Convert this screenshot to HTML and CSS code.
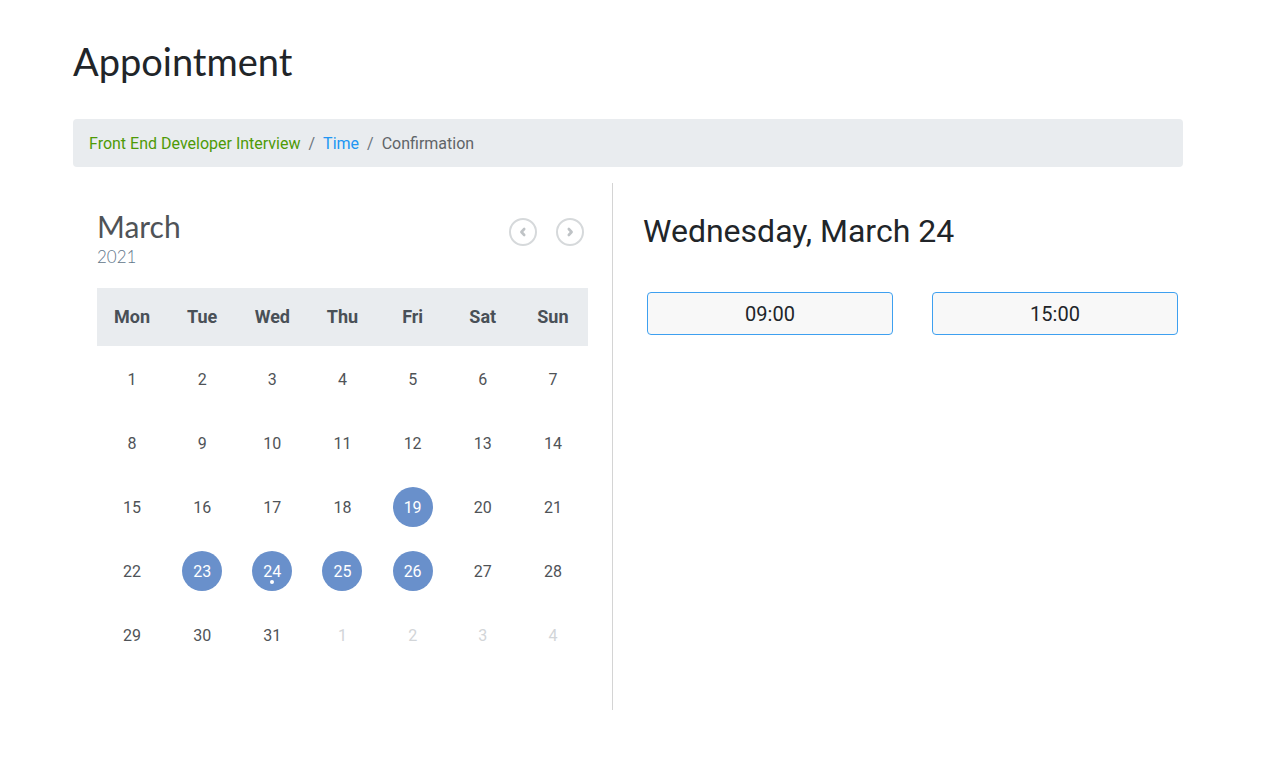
FILE: index.html
```html
<!DOCTYPE html>
<html lang="en">
<head>
<meta charset="utf-8">
<title>Appointment</title>
<link rel="stylesheet" href="styles.css">
</head>
<body>
<div class="container">
  <h1 class="page-title">Appointment</h1>
  <nav class="breadcrumb">
    <span class="crumb crumb-done">Front End Developer Interview</span>
    <span class="sep">/</span>
    <span class="crumb crumb-active">Time</span>
    <span class="sep">/</span>
    <span class="crumb crumb-next">Confirmation</span>
  </nav>
  <div class="row">
    <section class="cal-col">
      <div class="cal-head">
        <div class="cal-title">
          <div class="month">March</div>
          <div class="year">2021</div>
        </div>
        <div class="cal-nav">
          <button class="nav-btn" aria-label="Previous month">
            <svg width="12" height="12" viewBox="0 0 12 12"><path d="M7.2 3 L4.4 6 L7.2 9" fill="none" stroke="#bfc3c6" stroke-width="2.6" stroke-linecap="round" stroke-linejoin="round"/></svg>
          </button>
          <button class="nav-btn" aria-label="Next month">
            <svg width="12" height="12" viewBox="0 0 12 12"><path d="M4.8 3 L7.6 6 L4.8 9" fill="none" stroke="#bfc3c6" stroke-width="2.6" stroke-linecap="round" stroke-linejoin="round"/></svg>
          </button>
        </div>
      </div>
      <div class="cal-grid">
        <div class="dow">Mon</div><div class="dow">Tue</div><div class="dow">Wed</div><div class="dow">Thu</div><div class="dow">Fri</div><div class="dow">Sat</div><div class="dow">Sun</div>

        <div class="day"><span>1</span></div><div class="day"><span>2</span></div><div class="day"><span>3</span></div><div class="day"><span>4</span></div><div class="day"><span>5</span></div><div class="day"><span>6</span></div><div class="day"><span>7</span></div>

        <div class="day"><span>8</span></div><div class="day"><span>9</span></div><div class="day"><span>10</span></div><div class="day"><span>11</span></div><div class="day"><span>12</span></div><div class="day"><span>13</span></div><div class="day"><span>14</span></div>

        <div class="day"><span>15</span></div><div class="day"><span>16</span></div><div class="day"><span>17</span></div><div class="day"><span>18</span></div><div class="day"><span class="avail">19</span></div><div class="day"><span>20</span></div><div class="day"><span>21</span></div>

        <div class="day"><span>22</span></div><div class="day"><span class="avail">23</span></div><div class="day"><span class="avail selected">24</span></div><div class="day"><span class="avail">25</span></div><div class="day"><span class="avail">26</span></div><div class="day"><span>27</span></div><div class="day"><span>28</span></div>

        <div class="day"><span>29</span></div><div class="day"><span>30</span></div><div class="day"><span>31</span></div><div class="day other"><span>1</span></div><div class="day other"><span>2</span></div><div class="day other"><span>3</span></div><div class="day other"><span>4</span></div>
      </div>
    </section>
    <section class="time-col">
      <h2 class="date-title">Wednesday, March 24</h2>
      <div class="slots">
        <button class="slot">09:00</button>
        <button class="slot">15:00</button>
      </div>
    </section>
  </div>
</div>
</body>
</html>
```

FILE: styles.css
```css
* { box-sizing: border-box; }

html, body {
  margin: 0;
  padding: 0;
  background: #ffffff;
}

body {
  font-family: Roboto, "Liberation Sans", sans-serif;
  color: #212529;
}

.container {
  width: 1110px;
  margin-left: 73px;
  padding-top: 39px;
}

.page-title {
  margin: 0 0 35px 0;
  font-family: Lato, "Open Sans", sans-serif;
  font-weight: 400;
  font-size: 38px;
  line-height: 45px;
  color: #212529;
}

.breadcrumb {
  display: flex;
  align-items: center;
  height: 48px;
  padding: 0 16px;
  background: #e9ecef;
  border-radius: 4px;
  font-size: 16px;
  margin-bottom: 16px;
}

.sep {
  color: #6c757d;
  padding: 0 8px;
}

.crumb-done { color: #4e9a06; }
.crumb-active { color: #2196f3; }
.crumb-next { color: #5f6468; }

.row {
  display: flex;
  height: 527px;
}

.cal-col {
  width: 540px;
  border-right: 1px solid #d4d4d4;
  padding: 25px 24px 0 24px;
}

.cal-head {
  display: flex;
  justify-content: space-between;
  align-items: flex-start;
  margin-bottom: 21px;
}

.month {
  font-family: Lato, "Open Sans", sans-serif;
  font-size: 30px;
  line-height: 36px;
  color: #4f5357;
}

.year {
  font-family: Lato, "Open Sans", sans-serif;
  font-weight: 300;
  font-size: 17px;
  line-height: 20px;
  margin-top: 3px;
  color: #62768a;
}

.cal-nav {
  display: flex;
  gap: 19px;
  margin-top: 10px;
  margin-right: 4px;
}

.nav-btn {
  width: 28px;
  height: 28px;
  border: 2px solid #d6d9db;
  border-radius: 50%;
  background: #fff;
  padding: 0;
  display: flex;
  align-items: center;
  justify-content: center;
}

.cal-grid {
  display: grid;
  grid-template-columns: repeat(7, 1fr);
}

.dow {
  background: #e9ecef;
  height: 58px;
  padding-bottom: 2px;
  display: flex;
  align-items: center;
  justify-content: center;
  font-weight: 700;
  font-size: 18px;
  color: #495057;
}

.day {
  height: 64px;
  padding-top: 2px;
  display: flex;
  align-items: center;
  justify-content: center;
  font-size: 16px;
  color: #4f5357;
}

.day span {
  width: 40px;
  height: 40px;
  border-radius: 50%;
  display: flex;
  align-items: center;
  justify-content: center;
  position: relative;
}

.day .avail {
  background: #6990cb;
  color: #ffffff;
}

.day .selected::after {
  content: "";
  position: absolute;
  left: 18px;
  bottom: 7px;
  width: 4px;
  height: 4px;
  border-radius: 50%;
  background: #ffffff;
}

.day.other { color: #d2d5d8; }

.time-col {
  flex: 1;
  padding: 29px 0 0 30px;
}

.date-title {
  margin: 0 0 42px 0;
  font-weight: 400;
  font-size: 32px;
  line-height: 38px;
  color: #212529;
}

.slots {
  display: flex;
  gap: 39px;
  padding-left: 4px;
}

.slot {
  width: 246px;
  height: 43px;
  background: #f8f8f8;
  border: 1px solid #3ea0f0;
  border-radius: 4px;
  font-family: Roboto, "Liberation Sans", sans-serif;
  font-size: 20px;
  color: #212529;
  padding: 0;
}
```
